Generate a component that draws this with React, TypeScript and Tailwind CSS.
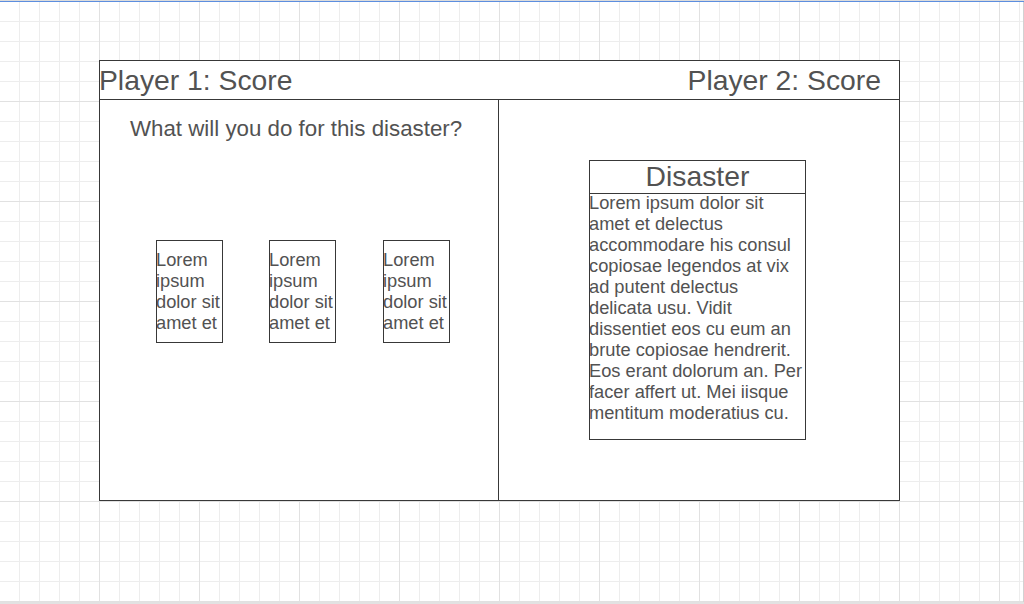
import React from 'react';

const cardText = 'Lorem ipsum dolor sit amet et';

const disasterText =
    'Lorem ipsum dolor sit amet et delectus accommodare his consul copiosae legendos at vix ad putent delectus delicata usu. Vidit dissentiet eos cu eum an brute copiosae hendrerit. Eos erant dolorum an. Per facer affert ut. Mei iisque mentitum moderatius cu.';

const ChoiceCard: React.FC<{ text: string; className?: string }> = ({ text, className = '' }) => (
    <div className={`w-[67px] h-[103px] border border-[#383838] bg-white flex items-center overflow-hidden ${className}`}>
        <p className="-translate-x-px -translate-y-px text-[18.25px] leading-[21px]">{text}</p>
    </div>
);

const App: React.FC = () => {
    return (
        <div className="w-[1024px] h-[604px] flex flex-col overflow-hidden bg-white font-['Liberation_Sans',Arial,sans-serif]">
            <div className="h-px bg-[#dcdcdc]" />
            <div className="h-px bg-[#5d8edf]" />

            {/* canvas with grid */}
            <div className="flex-1 border-r border-[#d2d2d2] bg-white bg-[linear-gradient(to_right,#e1e1e1_1px,transparent_1px),linear-gradient(to_bottom,#e1e1e1_1px,transparent_1px),linear-gradient(to_right,#ededed_1px,transparent_1px),linear-gradient(to_bottom,#ededed_1px,transparent_1px)] [background-size:100px_100px,100px_100px,20px_20px,20px_20px] [background-position:99px_99px,99px_99px,19px_19px,19px_19px] pl-[99px] pt-[58px]">
                <div className="w-[801px] h-[441px] border border-[#383838] bg-white flex flex-col text-[#525252]">
                    {/* header */}
                    <div className="h-[39px] border-b border-[#383838] flex justify-between pr-[18px] text-[28.3px] leading-[38px]">
                        <span className="-translate-x-px">Player 1: Score</span>
                        <span>Player 2: Score</span>
                    </div>

                    <div className="flex flex-1">
                        {/* left: choices */}
                        <div className="w-[399px] border-r border-[#383838] flex flex-col">
                            <p className="pl-[30px] pt-[16px] text-[22.3px] leading-[26px]">What will you do for this disaster?</p>
                            <div className="flex gap-[46px] pl-[56px] mt-[98px]">
                                <ChoiceCard text={cardText} />
                                <ChoiceCard text={cardText} />
                                <ChoiceCard text={cardText} className="ml-px" />
                            </div>
                        </div>

                        {/* right: disaster card */}
                        <div className="flex-1 pl-[90px] pt-[60px]">
                            <div className="w-[217px] h-[280px] border border-[#383838] flex flex-col">
                                <div className="h-[33px] border-b border-[#383838] text-center text-[28.3px] leading-[30px]">Disaster</div>
                                <p className="-mt-[2px] -translate-x-px text-[18.25px] leading-[21px]">{disasterText}</p>
                            </div>
                        </div>
                    </div>
                </div>
            </div>

            <div className="h-[2px] bg-[#e2e2e2]" />
        </div>
    );
};

export default App;
